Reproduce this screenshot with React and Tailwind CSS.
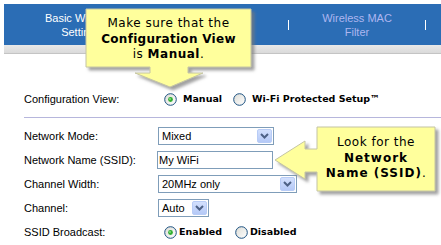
import React from "react";

function Radio({ checked }) {
  return (
    <svg width="13" height="13" viewBox="0 0 13 13" className="shrink-0">
      <defs>
        <linearGradient id="rg" x1="0" y1="0" x2="1" y2="1">
          <stop offset="0" stopColor="#dcdcd6" />
          <stop offset="1" stopColor="#ffffff" />
        </linearGradient>
      </defs>
      <circle cx="6.5" cy="6.5" r="5.8" fill="url(#rg)" stroke="#1c5180" strokeWidth="1" />
      {checked && <circle cx="6.5" cy="6.5" r="2.4" fill="#2fae2f" />}
      {checked && <circle cx="6" cy="6" r="0.9" fill="#8de08d" />}
    </svg>
  );
}

function Chevron() {
  return (
    <span className="w-[15px] h-[14px] mr-px flex items-center justify-center rounded-[2px] border border-[#b8ccf6] bg-gradient-to-b from-[#d3e0fd] to-[#b5c9f7]">
      <svg width="9" height="6" viewBox="0 0 9 6">
        <path d="M1 1 L4.5 4.5 L8 1" fill="none" stroke="#4d6185" strokeWidth="2" />
      </svg>
    </span>
  );
}

function Select({ value, w }) {
  return (
    <div className={`${w} h-[18px] border border-[#7f9db9] bg-white flex items-center`}>
      <span className="flex-1 pl-[3px] leading-none">{value}</span>
      <Chevron />
    </div>
  );
}

function Row({ label, children }) {
  return (
    <div className="h-[24px] flex items-center">
      <div className="w-[134px] shrink-0">{label}</div>
      {children}
    </div>
  );
}

export default function App() {
  const bold = "[font-family:'DejaVu_Sans',Verdana,sans-serif] font-bold text-[9.5px]";
  return (
    <div className="relative w-[441px] h-[245px] overflow-hidden bg-white text-[11px] text-black [font-family:'Liberation_Sans',Arial,sans-serif]">
      <div className="pt-[4px] pl-[4px]">
        <div className="h-[41px] bg-[#2b6db5] flex items-center text-[11px] leading-[14px]">
          <div className="w-[154px] text-center text-white">
            Basic Wireless
            <br />
            Settings
          </div>
          <div className="w-[130px]" />
          <div className="w-px h-[10px] bg-white" />
          <div className="w-[136px] text-center text-[#aeb6f0]">
            Wireless MAC
            <br />
            Filter
          </div>
          <div className="w-px h-[10px] bg-white" />
        </div>
        <div className="h-[9px] bg-gradient-to-b from-[#e9e9e9] to-[#dadada] border-b border-[#c4c4c4]" />
      </div>

      <div className="pl-[24px]">
        <div className="mt-[33px]">
          <Row label="Configuration View:">
            <div className="flex items-center ml-[6px]">
              <Radio checked />
              <span className={`${bold} ml-[6px]`}>Manual</span>
              <span className="ml-[11px] flex items-center">
                <Radio />
              </span>
              <span className={`${bold} ml-[6px]`}>Wi-Fi Protected Setup™</span>
            </div>
          </Row>
        </div>
        <div className="mt-[6px] h-px bg-[#b6b6dc]" />
        <div className="mt-[6px]">
          <Row label="Network Mode:">
            <Select value="Mixed" w="w-[116px]" />
          </Row>
          <Row label="Network Name (SSID):">
            <div className="w-[116px] h-[18px] -ml-px border border-[#7f9db9] bg-white flex items-center pl-px">
              My WiFi
            </div>
          </Row>
          <Row label="Channel Width:">
            <Select value="20MHz only" w="w-[139px]" />
          </Row>
          <Row label="Channel:">
            <Select value="Auto" w="w-[51px]" />
          </Row>
          <Row label="SSID Broadcast:">
            <div className="flex items-center ml-[6px]">
              <Radio checked />
              <span className={`${bold} ml-[2px]`}>Enabled</span>
              <span className="ml-[13px] flex items-center">
                <Radio />
              </span>
              <span className={`${bold} ml-[2px]`}>Disabled</span>
            </div>
          </Row>
        </div>
      </div>

      <svg className="absolute inset-0 pointer-events-none" width="441" height="245">
        <defs>
          <filter id="sh" x="-10%" y="-10%" width="130%" height="140%">
            <feDropShadow dx="3" dy="3" stdDeviation="1.6" floodColor="#7a7a7a" floodOpacity="0.7" />
          </filter>
        </defs>
        <polygon
          points="86,9 251,9 251,67 188,67 188,73 203,73 170,87 135,73 150,73 150,67 86,67"
          fill="#ffff9c"
          stroke="#c4c4a4"
          strokeWidth="1"
          filter="url(#sh)"
        />
        <polygon
          points="317,127 435,127 435,191 317,191 317,172 305,172 305,179 275,160 305,141 305,149 317,149"
          fill="#ffff9c"
          stroke="#c4c4a4"
          strokeWidth="1"
          filter="url(#sh)"
        />
      </svg>

      <div className="absolute left-[86px] top-[16px] w-[165px] text-center text-[12px] leading-[15.5px] tracking-[0.5px] [font-family:'DejaVu_Sans',Verdana,sans-serif]">
        Make sure that the
        <br />
        <b className="tracking-[0.3px]">Configuration View</b>
        <br />
        is <b>Manual</b>.
      </div>

      <div className="absolute left-[317px] top-[135px] w-[118px] text-center text-[12px] leading-[15.5px] tracking-[0.5px] [font-family:'DejaVu_Sans',Verdana,sans-serif]">
        Look for the
        <br />
        <b className="tracking-[1px]">Network</b>
        <br />
        <b className="tracking-[1px]">Name (SSID)</b>.
      </div>
    </div>
  );
}
